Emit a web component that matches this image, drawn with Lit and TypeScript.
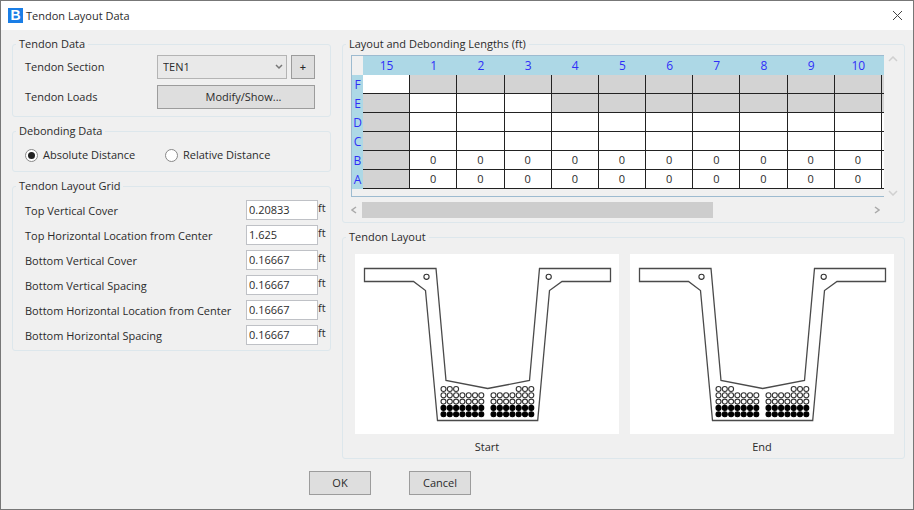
import { LitElement, html, css, svg } from "lit";
import { customElement, property, state } from "lit/decorators.js";
import { classMap } from "lit/directives/class-map.js";

const COLUMNS = ["15", "1", "2", "3", "4", "5", "6", "7", "8", "9", "10"];

// One character per column: "x" is a disabled cell, "." an empty one, "0" a debonding length.
const ROWS: Array<[string, string]> = [
  ["F", ".xxxxxxxxxx"],
  ["E", "x...xxxxxxx"],
  ["D", "x.........."],
  ["C", "x.........."],
  ["B", "x0000000000"],
  ["A", "x0000000000"],
];

const FIELDS: Array<[string, string, string]> = [
  ["top-cover", "Top Vertical Cover", "0.20833"],
  ["top-location", "Top Horizontal Location from Center", "1.625"],
  ["bottom-cover", "Bottom Vertical Cover", "0.16667"],
  ["bottom-v-spacing", "Bottom Vertical Spacing", "0.16667"],
  ["bottom-location", "Bottom Horizontal Location from Center", "0.16667"],
  ["bottom-h-spacing", "Bottom Horizontal Spacing", "0.16667"],
];

/** Cross section of the girder with its strand pattern. */
@customElement("girder-section")
export class GirderSection extends LitElement {
  @property() label = "";

  static styles = css`
    :host {
      display: block;
      flex: 1 1 0;
      min-width: 0;
    }
    .figure {
      margin: 0;
    }
    .drawing {
      display: block;
      width: 100%;
      height: auto;
      background: #fff;
    }
    .outline {
      fill: none;
      stroke: #4a4a4a;
      stroke-width: 1.3;
    }
    .open {
      fill: #fff;
      stroke: #333;
      stroke-width: 1.1;
    }
    .filled {
      fill: #000;
      stroke: #000;
      stroke-width: 1.1;
    }
    .caption {
      margin-top: 5px;
      line-height: 16px;
      text-align: center;
    }
  `;

  private strands() {
    const dots = [];
    for (let row = 0; row < 5; row++) {
      for (let i = 0; i < 14; i++) {
        if (row === 0 && i > 2 && i < 11) continue;
        const x = i < 7 ? 88.5 + i * 6.3 : 138.5 + (i - 7) * 6.3;
        dots.push(svg`<circle class=${row > 2 ? "filled" : "open"} cx=${x} cy=${135 + row * 6.3} r="2.5"></circle>`);
      }
    }
    return dots;
  }

  render() {
    return html`
      <figure class="figure">
        <svg class="drawing" viewBox="0 0 264 180" role="img" aria-label="Tendon layout, ${this.label}">
          <path
            class="outline"
            d="M9.5 14.5H81L91 126.5L132.7 134.5L174.5 126.5L184.5 14.5H255.5V27.5H207L194.5 36.5L182.7 166.5H82.5L70.5 36.5L58.5 27.5H9.5Z"
          ></path>
          <circle class="open" cx="71.5" cy="22.8" r="2.6"></circle>
          <circle class="open" cx="193.7" cy="22.8" r="2.6"></circle>
          ${this.strands()}
        </svg>
        <figcaption class="caption">${this.label}</figcaption>
      </figure>
    `;
  }
}

@customElement("app-root")
export class AppRoot extends LitElement {
  @state() private mode = "absolute";

  static styles = css`
    :host {
      display: block;
      box-sizing: border-box;
      min-height: 100vh;
      border: 1px solid #777;
      background: #f0f0f0;
      color: #2b2b2b;
      font: 11px/16px "Open Sans", "Noto Sans", sans-serif;
    }
    *,
    *::before {
      box-sizing: border-box;
    }
    button,
    input,
    select {
      margin: 0;
      font: inherit;
      color: inherit;
      border-radius: 0;
    }
    .titlebar {
      display: flex;
      align-items: center;
      height: 29px;
      padding: 0 10px 0 7px;
      background: #fff;
    }
    .logo {
      width: 15px;
      height: 15px;
      margin-right: 3px;
      background: #1a7ee6;
      color: #fff;
      font: bold 14px/15px "Liberation Sans", sans-serif;
      text-align: center;
    }
    .title {
      flex: 1;
      margin: 0;
      font-size: 11px;
      font-weight: 400;
    }
    .close {
      display: flex;
      padding: 0;
      border: 0;
      background: none;
      color: #444;
    }
    .stroke {
      fill: none;
      stroke: currentColor;
    }
    .main {
      display: grid;
      grid-template-columns: 319px minmax(0, 1fr);
      column-gap: 11px;
      align-items: start;
      padding: 6px 8px 0 11px;
    }
    .column {
      display: flex;
      flex-direction: column;
      gap: 6px;
      min-width: 0;
    }
    .group {
      min-width: 0;
      margin: 0;
      border: 1px solid #dde7ec;
      border-radius: 3px;
    }
    .legend {
      margin-left: -9px;
      padding: 0 3px;
    }
    .lengths > .legend {
      margin-left: -5px;
    }
    .data {
      display: grid;
      grid-template-columns: 1fr 158px;
      row-gap: 6px;
      align-items: center;
      padding: 3px 15px 7px 12px;
    }
    .debonding {
      display: flex;
      padding: 4px 12px;
    }
    .cover {
      display: grid;
      grid-template-columns: 1fr 72px 12px;
      row-gap: 5px;
      padding: 6px 0 5px 12px;
    }
    .lengths {
      padding: 3px 3px 4px 8px;
    }
    .layout {
      display: flex;
      gap: 11px;
      padding: 9px 10px 3px 12px;
    }
    .picker {
      display: flex;
      gap: 4px;
    }
    .combo {
      position: relative;
      flex: 1;
    }
    .select {
      display: block;
      width: 100%;
      height: 24px;
      padding: 0 5px;
      border: 1px solid #b4b4b4;
      background: #e9e9e9;
      appearance: none;
    }
    .chevron {
      position: absolute;
      top: 9px;
      right: 4px;
      color: #777;
      pointer-events: none;
    }
    .button {
      height: 24px;
      padding: 0;
      border: 1px solid #9c9c9c;
      background: #dedede;
    }
    .plus {
      width: 24px;
      font-weight: 600;
    }
    .modify {
      padding-left: 15px;
    }
    .choice {
      display: flex;
      align-items: center;
      gap: 5px;
      width: 140px;
      height: 24px;
    }
    .radio {
      display: grid;
      place-items: center;
      width: 13px;
      height: 13px;
      border: 1px solid #888;
      border-radius: 50%;
      background: #fff;
      appearance: none;
    }
    .radio:checked::before {
      content: "";
      width: 7px;
      height: 7px;
      border-radius: 50%;
      background: #222;
    }
    .name {
      height: 20px;
      line-height: 22px;
    }
    .number {
      width: 100%;
      height: 20px;
      padding: 0 2px 1px;
      border: 1px solid #bfc1c6;
      background: #fff;
    }
    .viewport {
      display: grid;
      grid-template-columns: minmax(0, 1fr) 17px;
      row-gap: 5px;
    }
    .frame {
      padding-bottom: 7px;
      border: 1px solid #9dbbd0;
      border-right: 0;
    }
    .table {
      width: 100%;
      table-layout: fixed;
      border-collapse: separate;
      border-spacing: 0;
    }
    .table th,
    .table td {
      height: 19px;
      padding: 0;
      font-weight: 400;
      line-height: 18px;
      text-align: center;
    }
    .table th {
      background: #add8e6;
      color: #2f2ff8;
      font-size: 12px;
    }
    .table .corner {
      width: 11px;
      background: #f0f0f0;
    }
    .edge {
      width: 2px;
    }
    .cell {
      border: 1px solid #222;
      border-width: 0 1px 1px 0;
      background: #fff;
    }
    .off {
      background: #d3d3d3;
    }
    .rest {
      border-right: 0;
    }
    .vbar {
      display: flex;
      flex-direction: column;
      justify-content: space-between;
      align-items: center;
      color: #d0d0d0;
    }
    .hbar {
      display: flex;
      align-items: center;
      height: 16px;
      color: #aaa;
    }
    .arrow {
      display: flex;
      justify-content: center;
      width: 11px;
      padding: 0;
      border: 0;
      background: none;
      color: inherit;
    }
    .vbar .arrow {
      padding: 1px 0;
    }
    .hbar .first {
      justify-content: flex-start;
    }
    .hbar .last {
      width: 14px;
    }
    .track {
      flex: 1;
      height: 100%;
    }
    .thumb {
      width: 69%;
      height: 100%;
      background: #cdcdcd;
    }
    .footer {
      display: flex;
      gap: 38px;
      padding: 12px 8px 14px 308px;
    }
    .action {
      width: 62px;
    }
  `;

  private choice(value: string, text: string) {
    return html`
      <label class="choice">
        <input
          class="radio"
          type="radio"
          name="distance"
          value=${value}
          .checked=${this.mode === value}
          @change=${() => (this.mode = value)}
        />
        ${text}
      </label>
    `;
  }

  private arrow(name: string, d: string, w: number, h: number, extra = "") {
    return html`
      <button class="arrow ${extra}" type="button" aria-label=${name}>
        <svg width=${w} height=${h} viewBox="0 0 ${w} ${h}">
          <path class="stroke" d=${d} stroke-width="1.5"></path>
        </svg>
      </button>
    `;
  }

  private table() {
    return html`
      <table class="table">
        <thead>
          <tr>
            <td class="corner"></td>
            ${COLUMNS.map((c) => html`<th scope="col">${c}</th>`)}
            <th class="edge"></th>
          </tr>
        </thead>
        <tbody>
          ${ROWS.map(
            ([name, cells]) => html`
              <tr>
                <th scope="row">${name}</th>
                ${[...cells].map(
                  (c) => html`<td class=${classMap({ cell: true, off: c === "x" })}>${c === "0" ? "0" : ""}</td>`
                )}
                <td class=${classMap({ cell: true, rest: true, off: cells.endsWith("x") })}></td>
              </tr>
            `
          )}
        </tbody>
      </table>
    `;
  }

  render() {
    return html`
      <header class="titlebar">
        <span class="logo" aria-hidden="true">B</span>
        <h1 class="title">Tendon Layout Data</h1>
        <button class="close" type="button" aria-label="Close">
          <svg width="11" height="11" viewBox="0 0 11 11">
            <path class="stroke" d="M1 1L10 10M10 1L1 10"></path>
          </svg>
        </button>
      </header>

      <main class="main">
        <div class="column">
          <fieldset class="group data">
            <legend class="legend">Tendon Data</legend>
            <label for="section">Tendon Section</label>
            <div class="picker">
              <div class="combo">
                <select class="select" id="section">
                  <option>TEN1</option>
                </select>
                <svg class="chevron" width="8" height="6" viewBox="0 0 8 6">
                  <path class="stroke" d="M1 1L4 4L7 1" stroke-width="1.5"></path>
                </svg>
              </div>
              <button class="button plus" type="button">+</button>
            </div>
            <label for="loads">Tendon Loads</label>
            <button class="button modify" id="loads" type="button">Modify/Show...</button>
          </fieldset>

          <fieldset class="group debonding">
            <legend class="legend">Debonding Data</legend>
            ${this.choice("absolute", "Absolute Distance")} ${this.choice("relative", "Relative Distance")}
          </fieldset>

          <fieldset class="group cover">
            <legend class="legend">Tendon Layout Grid</legend>
            ${FIELDS.map(
              ([id, text, value]) => html`
                <label class="name" for=${id}>${text}</label>
                <input class="number" id=${id} type="text" .value=${value} />
                <span>ft</span>
              `
            )}
          </fieldset>
        </div>

        <div class="column">
          <fieldset class="group lengths">
            <legend class="legend">Layout and Debonding Lengths (ft)</legend>
            <div class="viewport">
              <div class="frame">${this.table()}</div>
              <div class="vbar">
                ${this.arrow("Scroll up", "M1 5L5 1L9 5", 10, 6)} ${this.arrow("Scroll down", "M1 1L5 5L9 1", 10, 6)}
              </div>
              <div class="hbar">
                ${this.arrow("Scroll left", "M5 1L1 4L5 7", 6, 8, "first")}
                <div class="track"><div class="thumb"></div></div>
                ${this.arrow("Scroll right", "M1 1L5 4L1 7", 6, 8, "last")}
              </div>
            </div>
          </fieldset>

          <fieldset class="group layout">
            <legend class="legend">Tendon Layout</legend>
            <girder-section label="Start"></girder-section>
            <girder-section label="End"></girder-section>
          </fieldset>
        </div>
      </main>

      <footer class="footer">
        <button class="button action" type="button">OK</button>
        <button class="button action" type="button">Cancel</button>
      </footer>
    `;
  }
}
